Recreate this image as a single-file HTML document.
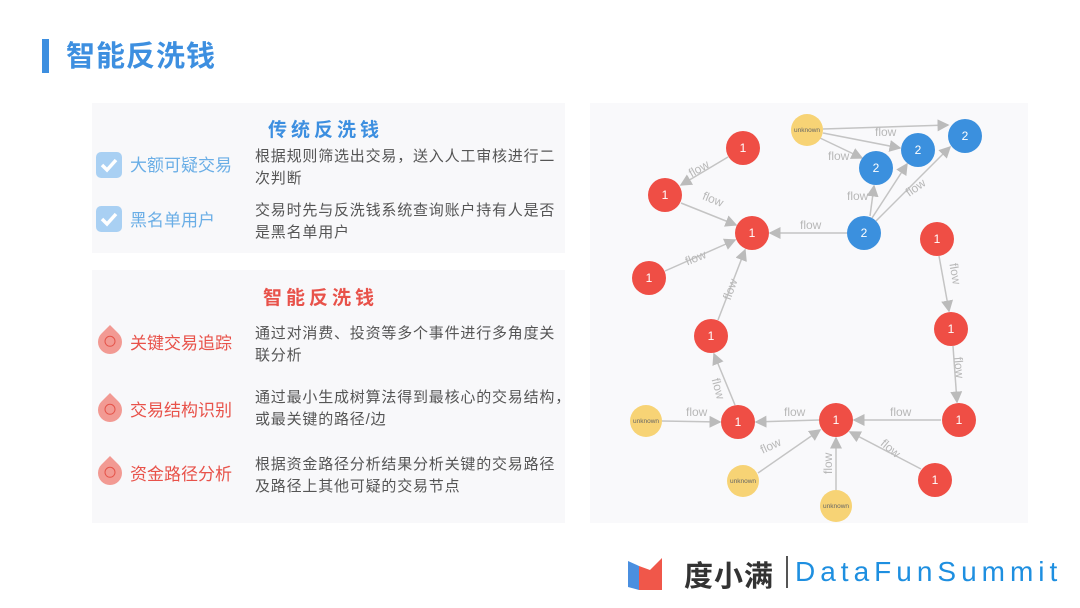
<!DOCTYPE html>
<html><head><meta charset="utf-8"><style>
body{margin:0;width:1080px;height:608px;background:#fff;position:relative;overflow:hidden;font-family:"Liberation Sans","Noto Sans CJK SC",sans-serif}
.abs{position:absolute}
.panel{position:absolute;background:#f8f8fa}
.h{position:absolute;font-weight:bold;font-size:19px;letter-spacing:4px}
.lab{position:absolute;font-size:17px;white-space:nowrap}
.desc{position:absolute;font-size:15px;letter-spacing:.8px;color:#555;line-height:22px;white-space:nowrap}
.chk{position:absolute;width:26px;height:26px;border-radius:5px;background:#a9d0f3}
.drop{position:absolute;width:24px;height:24px;background:#f29a93;border-radius:0 50% 50% 50%;transform:rotate(45deg)}
.drop i{position:absolute;left:6px;top:6px;width:9px;height:9px;border:1.6px solid #e5544a;border-radius:50%;transform:rotate(-45deg)}
</style></head><body>
<div class="abs" style="left:42px;top:39px;width:7px;height:34px;background:#3d8fe0"></div>
<div class="abs" style="left:66px;top:33px;font-size:29px;font-weight:bold;color:#3d8fe0;letter-spacing:1px">智能反洗钱</div>

<div class="panel" style="left:92px;top:103px;width:473px;height:150px"></div>
<div class="panel" style="left:92px;top:270px;width:473px;height:253px"></div>
<div class="h" style="left:268px;top:115px;color:#3d8fe0">传统反洗钱</div>
<div class="chk" style="left:96px;top:152px"><svg width="26" height="26"><path d="M6 13l5 5 9-10" stroke="#fff" stroke-width="3.5" fill="none"/></svg></div>
<div class="lab" style="left:130px;top:151px;color:#6aaee6">大额可疑交易</div>
<div class="desc" style="left:255px;top:146px">根据规则筛选出交易，送入人工审核进行二<br>次判断</div>
<div class="chk" style="left:96px;top:206px"><svg width="26" height="26"><path d="M6 13l5 5 9-10" stroke="#fff" stroke-width="3.5" fill="none"/></svg></div>
<div class="lab" style="left:130px;top:206px;color:#6aaee6">黑名单用户</div>
<div class="desc" style="left:255px;top:200px">交易时先与反洗钱系统查询账户持有人是否<br>是黑名单用户</div>

<div class="h" style="left:263px;top:283px;color:#e8524a">智能反洗钱</div>
<div class="drop" style="left:98px;top:330px"><i></i></div>
<div class="lab" style="left:130px;top:329px;color:#e8524a">关键交易追踪</div>
<div class="desc" style="left:255px;top:323px">通过对消费、投资等多个事件进行多角度关<br>联分析</div>
<div class="drop" style="left:98px;top:398px"><i></i></div>
<div class="lab" style="left:130px;top:396px;color:#e8524a">交易结构识别</div>
<div class="desc" style="left:255px;top:387px">通过最小生成树算法得到最核心的交易结构，<br>或最关键的路径/边</div>
<div class="drop" style="left:98px;top:461px"><i></i></div>
<div class="lab" style="left:130px;top:460px;color:#e8524a">资金路径分析</div>
<div class="desc" style="left:255px;top:454px">根据资金路径分析结果分析关键的交易路径<br>及路径上其他可疑的交易节点</div>

<div class="panel" style="left:590px;top:103px;width:438px;height:420px;background:#f9f9fb"></div>
<svg class="abs" style="left:0;top:0" width="1080" height="608">
<defs><marker id="a" markerWidth="8" markerHeight="8" refX="7" refY="4" orient="auto"><path d="M0 0L8 4L0 8z" fill="#bbb"/></marker></defs>
<g stroke="#c4c4c4" stroke-width="1.5" marker-end="url(#a)" fill="none">
<line x1="728" y1="157" x2="681" y2="185"/>
<line x1="681" y1="203" x2="736" y2="225"/>
<line x1="665" y1="271" x2="735" y2="240"/>
<line x1="718" y1="320" x2="745" y2="250"/>
<line x1="847" y1="233" x2="770" y2="233"/>
<line x1="870" y1="216" x2="874" y2="186"/>
<line x1="872" y1="218" x2="907" y2="164"/>
<line x1="876" y1="221" x2="950" y2="147"/>
<line x1="823" y1="129" x2="948" y2="125"/>
<line x1="823" y1="133" x2="900" y2="148"/>
<line x1="820" y1="138" x2="862" y2="158"/>
<line x1="939" y1="256" x2="949" y2="311"/>
<line x1="953" y1="346" x2="957" y2="402"/>
<line x1="941" y1="420" x2="854" y2="420"/>
<line x1="819" y1="420" x2="756" y2="422"/>
<line x1="735" y1="405" x2="714" y2="354"/>
<line x1="662" y1="421" x2="720" y2="422"/>
<line x1="758" y1="473" x2="820" y2="430"/>
<line x1="836" y1="490" x2="836" y2="438"/>
<line x1="921" y1="469" x2="850" y2="432"/>
</g>
<g font-size="12" fill="#b8b8b8" font-family="Liberation Sans">
<text x="688" y="172" transform="rotate(-30 700 168)">flow</text>
<text x="702" y="203" transform="rotate(22 712 200)">flow</text>
<text x="685" y="262" transform="rotate(-22 695 258)">flow</text>
<text x="720" y="294" transform="rotate(-70 730 290)">flow</text>
<text x="800" y="229">flow</text>
<text x="875" y="136">flow</text>
<text x="828" y="160">flow</text>
<text x="847" y="200">flow</text>
<text x="905" y="192" transform="rotate(-35 915 188)">flow</text>
<text x="945" y="277" transform="rotate(80 955 273)">flow</text>
<text x="948" y="370" transform="rotate(85 958 367)">flow</text>
<text x="890" y="416">flow</text>
<text x="784" y="416">flow</text>
<text x="686" y="416">flow</text>
<text x="708" y="392" transform="rotate(75 718 388)">flow</text>
<text x="760" y="450" transform="rotate(-25 770 446)">flow</text>
<text x="820" y="470" transform="rotate(-90 828 466)">flow</text>
<text x="880" y="452" transform="rotate(40 890 448)">flow</text>
</g>
<g fill="#ef4e45">
<circle cx="743" cy="148" r="17"/><circle cx="665" cy="195" r="17"/><circle cx="752" cy="233" r="17"/><circle cx="649" cy="278" r="17"/><circle cx="711" cy="336" r="17"/><circle cx="937" cy="239" r="17"/><circle cx="951" cy="329" r="17"/><circle cx="959" cy="420" r="17"/><circle cx="738" cy="422" r="17"/><circle cx="836" cy="420" r="17"/><circle cx="935" cy="480" r="17"/>
</g>
<g fill="#3b90de"><circle cx="864" cy="233" r="17"/><circle cx="876" cy="168" r="17"/><circle cx="918" cy="150" r="17"/><circle cx="965" cy="136" r="17"/></g>
<g fill="#f7d375"><circle cx="807" cy="130" r="16"/><circle cx="646" cy="421" r="16"/><circle cx="743" cy="481" r="16"/><circle cx="836" cy="506" r="16"/></g>
<g fill="#fff" font-size="12" text-anchor="middle" font-family="Liberation Sans">
<text x="743" y="152">1</text><text x="665" y="199">1</text><text x="752" y="237">1</text><text x="649" y="282">1</text><text x="711" y="340">1</text><text x="937" y="243">1</text><text x="951" y="333">1</text><text x="959" y="424">1</text><text x="738" y="426">1</text><text x="836" y="424">1</text><text x="935" y="484">1</text>
<text x="864" y="237">2</text><text x="876" y="172">2</text><text x="918" y="154">2</text><text x="965" y="140">2</text>
</g>
<g fill="#666" font-size="6.5" text-anchor="middle" font-family="Liberation Sans">
<text x="807" y="132">unknown</text><text x="646" y="423">unknown</text><text x="743" y="483">unknown</text><text x="836" y="508">unknown</text>
</g>
<path d="M628 561l11 5 0 24-11-3z" fill="#4a8fe0"/>
<path d="M639 566l11 4 12-12 0 32-23 0z" fill="#f0574a"/>
</svg>
<div class="abs" style="left:684px;top:553px;font-size:29px;color:#333;font-weight:bold;letter-spacing:1px">度小满</div>
<div class="abs" style="left:786px;top:556px;width:2px;height:32px;background:#555"></div>
<div class="abs" style="left:795px;top:556px;font-size:28px;color:#1e8fe0;letter-spacing:5px">DataFunSummit</div>
</body></html>
